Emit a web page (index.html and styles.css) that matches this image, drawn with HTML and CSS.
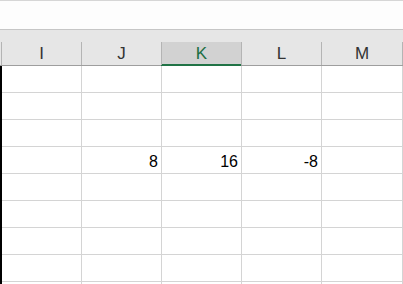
FILE: index.html
```html
<!DOCTYPE html>
<html>
<head>
<meta charset="utf-8">
<link rel="stylesheet" href="styles.css">
</head>
<body>
<div class="topbar"></div>
<div class="colheads">
  <div class="ch">I</div>
  <div class="ch">J</div>
  <div class="ch active">K</div>
  <div class="ch">L</div>
  <div class="ch wide">M</div>
  <div class="ch rest"></div>
</div>
<div class="grid">
  <div class="row"><div class="c"></div><div class="c"></div><div class="c"></div><div class="c"></div><div class="c wide"></div><div class="c rest"></div></div>
  <div class="row"><div class="c"></div><div class="c"></div><div class="c"></div><div class="c"></div><div class="c wide"></div><div class="c rest"></div></div>
  <div class="row"><div class="c"></div><div class="c"></div><div class="c"></div><div class="c"></div><div class="c wide"></div><div class="c rest"></div></div>
  <div class="row"><div class="c"></div><div class="c num">8</div><div class="c num">16</div><div class="c num">-8</div><div class="c wide"></div><div class="c rest"></div></div>
  <div class="row"><div class="c"></div><div class="c"></div><div class="c"></div><div class="c"></div><div class="c wide"></div><div class="c rest"></div></div>
  <div class="row"><div class="c"></div><div class="c"></div><div class="c"></div><div class="c"></div><div class="c wide"></div><div class="c rest"></div></div>
  <div class="row"><div class="c"></div><div class="c"></div><div class="c"></div><div class="c"></div><div class="c wide"></div><div class="c rest"></div></div>
  <div class="row"><div class="c"></div><div class="c"></div><div class="c"></div><div class="c"></div><div class="c wide"></div><div class="c rest"></div></div>
  <div class="row tail"><div class="c"></div><div class="c"></div><div class="c"></div><div class="c"></div><div class="c wide"></div><div class="c rest"></div></div>
</div>
</body>
</html>
```
FILE: styles.css
```css
html, body {
  margin: 0;
  padding: 0;
  background: #ffffff;
  overflow: hidden;
  width: 403px;
  height: 284px;
  font-family: "Liberation Sans", Arial, sans-serif;
}

.topbar {
  height: 28px;
  background: #fdfdfd;
  border-top: 1px solid #d6d6d6;
  border-bottom: 1px solid #c6c6c6;
}

.colheads {
  display: flex;
  align-items: flex-start;
  background: #e6e6e6;
  padding-top: 12px;
  padding-left: 1px;
  border-bottom: 1px solid #9e9e9e;
}

.ch {
  flex: none;
  box-sizing: border-box;
  width: 80px;
  height: 23px;
  border-left: 1px solid #b4b4b4;
  display: flex;
  align-items: center;
  justify-content: center;
  font-size: 17px;
  line-height: 23px;
  color: #333333;
}

.ch.wide { width: 81px; }
.ch.rest { width: 20px; }

.ch.active {
  background: #d2d2d2;
  color: #1e6f43;
  box-shadow: 0 1px 0 #217346, inset 0 -1px 0 #217346;
}

.grid {
  border-left: 2px solid #000000;
}

.row {
  display: flex;
  height: 27px;
}

.row.tail {
  height: 2px;
}

.c {
  flex: none;
  box-sizing: border-box;
  width: 80px;
  height: 27px;
  border-right: 1px solid #d4d4d4;
  border-bottom: 1px solid #d4d4d4;
}

.row.tail .c {
  height: 2px;
  border-bottom: none;
}

.c.wide { width: 81px; }
.c.rest { width: 20px; border-right: none; }

.num {
  font-size: 16px;
  line-height: 18px;
  color: #000000;
  text-align: right;
  padding-right: 3px;
  padding-top: 6px;
}
```
